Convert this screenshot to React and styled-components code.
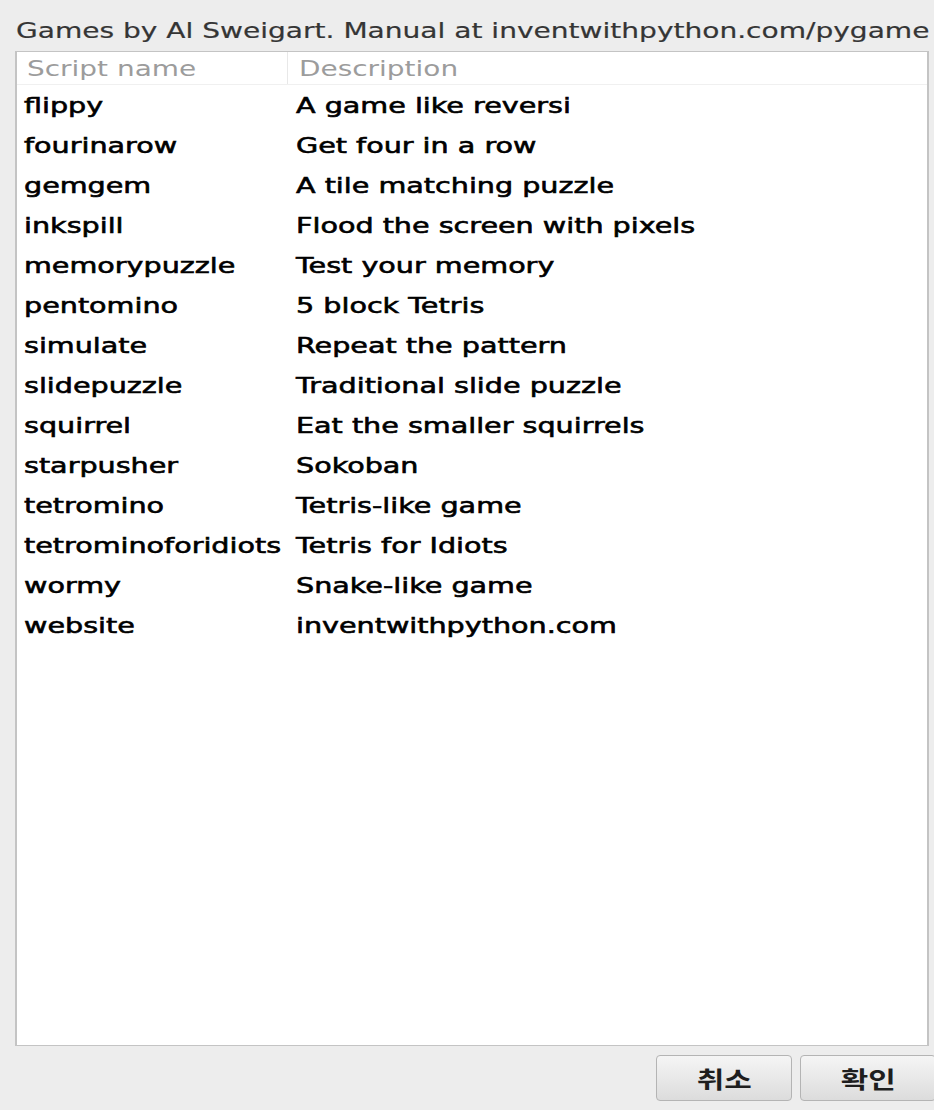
import React from "react";
import styled, { createGlobalStyle } from "styled-components";

const GlobalStyle = createGlobalStyle`
  html, body {
    margin: 0;
    padding: 0;
    background: #ededed;
  }
  body {
    font-family: "DejaVu Sans", "Noto Sans CJK KR", sans-serif;
  }
`;

const games = [
  ["flippy", "A game like reversi"],
  ["fourinarow", "Get four in a row"],
  ["gemgem", "A tile matching puzzle"],
  ["inkspill", "Flood the screen with pixels"],
  ["memorypuzzle", "Test your memory"],
  ["pentomino", "5 block Tetris"],
  ["simulate", "Repeat the pattern"],
  ["slidepuzzle", "Traditional slide puzzle"],
  ["squirrel", "Eat the smaller squirrels"],
  ["starpusher", "Sokoban"],
  ["tetromino", "Tetris-like game"],
  ["tetrominoforidiots", "Tetris for Idiots"],
  ["wormy", "Snake-like game"],
  ["website", "inventwithpython.com"],
];

const Dialog = styled.div`
  width: 934px;
  height: 1110px;
  display: flex;
  flex-direction: column;
  box-sizing: border-box;
  padding: 0 0 0 15px;
  overflow: hidden;
`;

// the dialog's text is drawn wide, so every label is stretched sideways
const Wide = styled.span`
  display: inline-block;
  white-space: nowrap;
  transform: scaleX(${(p) => p.$k || 1.27});
  transform-origin: left center;
`;

const Heading = styled.div`
  height: 51px;
  display: flex;
  align-items: center;
  padding-left: 1px;
  padding-top: 9px;
  box-sizing: border-box;
  font-size: 22px;
  color: #353535;
  -webkit-text-stroke: 0.2px #353535;
  white-space: nowrap;
`;

const ListBox = styled.div`
  width: 914px;
  height: 995px;
  box-sizing: border-box;
  background: #ffffff;
  border: 1px solid #c4c4c4;
  border-left-width: 2px;
  border-right-width: 2px;
`;

const HeaderRow = styled.div`
  display: grid;
  grid-template-columns: 271px 1fr;
  height: 32px;
  border-bottom: 1px solid #f0f0f0;
`;

const HeaderCell = styled.div`
  display: flex;
  align-items: center;
  padding-left: ${(p) => (p.$divider ? "10px" : "11px")};
  font-size: 22px;
  color: #9c9c9c;
  border-right: ${(p) => (p.$divider ? "1px solid #e8e8e8" : "none")};
`;

const Row = styled.div`
  display: grid;
  grid-template-columns: 271px 1fr;
  height: 40px;
  align-items: center;
`;

const Cell = styled.div`
  padding-left: ${(p) => (p.$first ? "7px" : "8px")};
  font-size: 22px;
  color: #000000;
  -webkit-text-stroke: 0.6px #000000;
  white-space: nowrap;
`;

const ButtonBar = styled.div`
  display: flex;
  justify-content: flex-end;
  gap: 8px;
  padding-top: 9px;
  margin-right: -2px;
`;

const Button = styled.button`
  width: 136px;
  height: 46px;
  border: 1px solid #b4b4b4;
  border-radius: 4px;
  background: linear-gradient(#f5f5f5, #dcdcdc);
  font-family: "Noto Sans CJK KR", sans-serif;
  font-size: 23px;
  font-weight: 700;
  color: #1e1e1e;
  padding: 0;
  display: flex;
  align-items: center;
  justify-content: center;
`;

const ButtonLabel = styled(Wide)`
  transform-origin: center center;
`;

export default function App() {
  return (
    <>
      <GlobalStyle />
      <Dialog>
        <Heading>
          <Wide $k={1.275}>Games by Al Sweigart. Manual at inventwithpython.com/pygame</Wide>
        </Heading>
        <ListBox>
          <HeaderRow>
            <HeaderCell $divider>
              <Wide>Script name</Wide>
            </HeaderCell>
            <HeaderCell>
              <Wide>Description</Wide>
            </HeaderCell>
          </HeaderRow>
          {games.map(([name, desc]) => (
            <Row key={name}>
              <Cell $first>
                <Wide $k={1.3}>{name}</Wide>
              </Cell>
              <Cell>
                <Wide $k={1.3}>{desc}</Wide>
              </Cell>
            </Row>
          ))}
        </ListBox>
        <ButtonBar>
          <Button>
            <ButtonLabel $k={1.3}>취소</ButtonLabel>
          </Button>
          <Button>
            <ButtonLabel $k={1.3}>확인</ButtonLabel>
          </Button>
        </ButtonBar>
      </Dialog>
    </>
  );
}
